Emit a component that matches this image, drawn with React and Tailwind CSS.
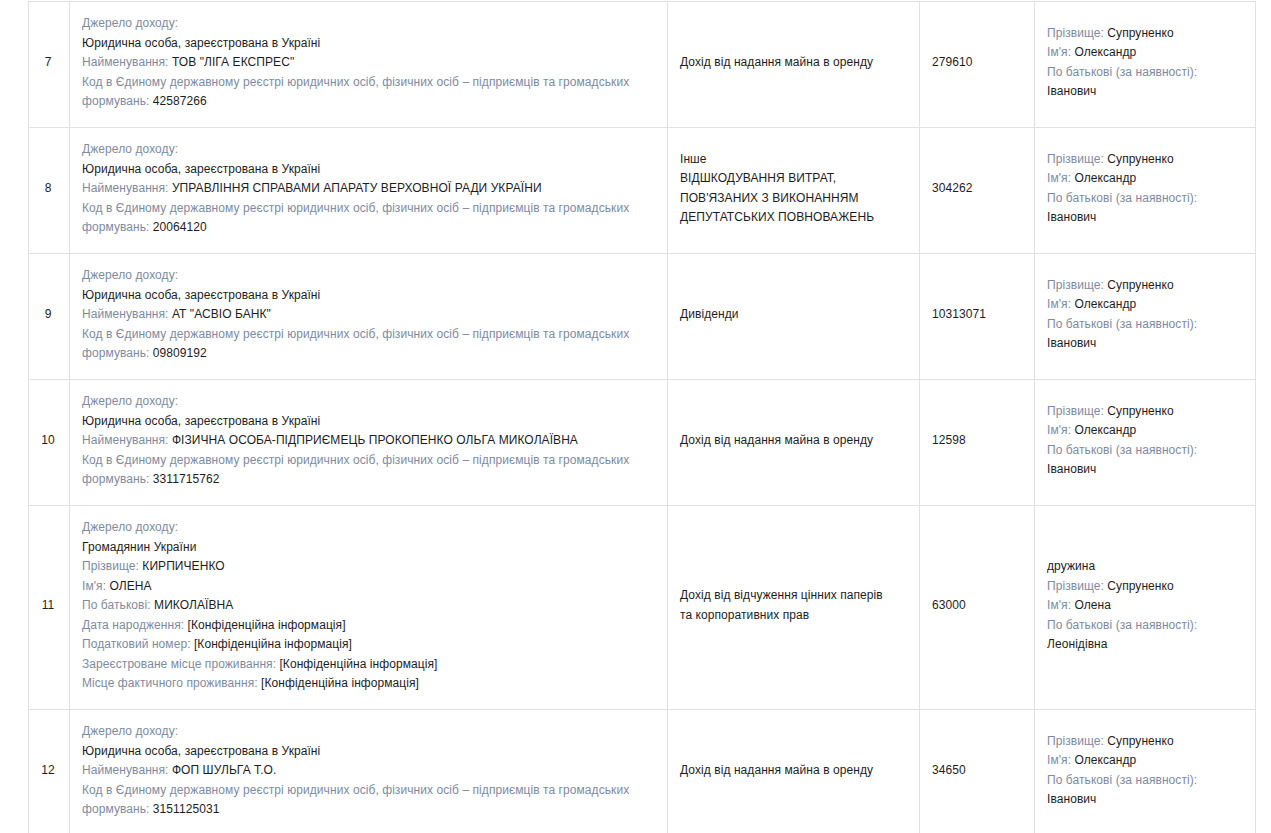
import React from "react";

const L = ({ children }) => <span className="text-[#7e8aa2]">{children}</span>;

const rows = [
  {
    n: 7,
    src: { kind: "legal", name: 'ТОВ "ЛІГА ЕКСПРЕС"', code: "42587266" },
    type: ["Дохід від надання майна в оренду"],
    amount: "279610",
    person: { rel: null, last: "Супруненко", first: "Олександр", middle: "Іванович" },
  },
  {
    n: 8,
    src: { kind: "legal", name: "УПРАВЛІННЯ СПРАВАМИ АПАРАТУ ВЕРХОВНОЇ РАДИ УКРАЇНИ", code: "20064120" },
    type: ["Інше", "ВІДШКОДУВАННЯ ВИТРАТ, ПОВ'ЯЗАНИХ З ВИКОНАННЯМ ДЕПУТАТСЬКИХ ПОВНОВАЖЕНЬ"],
    amount: "304262",
    person: { rel: null, last: "Супруненко", first: "Олександр", middle: "Іванович" },
  },
  {
    n: 9,
    src: { kind: "legal", name: 'АТ "АСВІО БАНК"', code: "09809192" },
    type: ["Дивіденди"],
    amount: "10313071",
    person: { rel: null, last: "Супруненко", first: "Олександр", middle: "Іванович" },
  },
  {
    n: 10,
    src: { kind: "legal", name: "ФІЗИЧНА ОСОБА-ПІДПРИЄМЕЦЬ ПРОКОПЕНКО ОЛЬГА МИКОЛАЇВНА", code: "3311715762" },
    type: ["Дохід від надання майна в оренду"],
    amount: "12598",
    person: { rel: null, last: "Супруненко", first: "Олександр", middle: "Іванович" },
  },
  {
    n: 11,
    src: { kind: "citizen" },
    type: ["Дохід від відчуження цінних паперів та корпоративних прав"],
    amount: "63000",
    person: { rel: "дружина", last: "Супруненко", first: "Олена", middle: "Леонідівна" },
  },
  {
    n: 12,
    src: { kind: "legal", name: "ФОП ШУЛЬГА Т.О.", code: "3151125031" },
    type: ["Дохід від надання майна в оренду"],
    amount: "34650",
    person: { rel: null, last: "Супруненко", first: "Олександр", middle: "Іванович" },
  },
];

function Source({ src }) {
  if (src.kind === "citizen") {
    return (
      <>
        <div><L>Джерело доходу:</L></div>
        <div>Громадянин України</div>
        <div><L>Прізвище:</L> КИРПИЧЕНКО</div>
        <div><L>Ім'я:</L> ОЛЕНА</div>
        <div><L>По батькові:</L> МИКОЛАЇВНА</div>
        <div><L>Дата народження:</L> [Конфіденційна інформація]</div>
        <div><L>Податковий номер:</L> [Конфіденційна інформація]</div>
        <div><L>Зареєстроване місце проживання:</L> [Конфіденційна інформація]</div>
        <div><L>Місце фактичного проживання:</L> [Конфіденційна інформація]</div>
      </>
    );
  }
  return (
    <>
      <div><L>Джерело доходу:</L></div>
      <div>Юридична особа, зареєстрована в Україні</div>
      <div><L>Найменування:</L> {src.name}</div>
      <div>
        <L>Код в Єдиному державному реєстрі юридичних осіб, фізичних осіб – підприємців та громадських формувань:</L>{" "}
        {src.code}
      </div>
    </>
  );
}

function Person({ p }) {
  return (
    <>
      {p.rel && <div>{p.rel}</div>}
      <div><L>Прізвище:</L> {p.last}</div>
      <div><L>Ім'я:</L> {p.first}</div>
      <div><L>По батькові (за наявності):</L> {p.middle}</div>
    </>
  );
}

const td = "border border-[#dfe1e6] pl-[12px] pt-[12px] pb-[15.5px] align-middle";

export default function App() {
  return (
    <div className="bg-white min-h-[833px] pt-[1px] text-[12px] leading-[19.5px] tracking-[0.07px] text-[#1d1d1f]" style={{ fontFamily: '"Liberation Sans", Arial, sans-serif' }}>
      <table className="ml-[28px] w-[1227px] table-fixed border-collapse">
        <colgroup>
          <col className="w-[41px]" />
          <col className="w-[598px]" />
          <col className="w-[252px]" />
          <col className="w-[115px]" />
          <col className="w-[221px]" />
        </colgroup>
        <tbody>
          {rows.map((r) => (
            <tr key={r.n}>
              <td className="border border-[#dfe1e6] pt-[12px] pb-[15.5px] align-middle text-center pr-[2px]">{r.n}</td>
              <td className={`${td} pr-[12px]`}>
                <Source src={r.src} />
              </td>
              <td className={`${td} pr-[24px]`}>
                {r.type.map((t, i) => (
                  <div key={i}>{t}</div>
                ))}
              </td>
              <td className={`${td} pr-[12px]`}>{r.amount}</td>
              <td className={`${td} pr-[12px]`}>
                <Person p={r.person} />
              </td>
            </tr>
          ))}
        </tbody>
      </table>
    </div>
  );
}
